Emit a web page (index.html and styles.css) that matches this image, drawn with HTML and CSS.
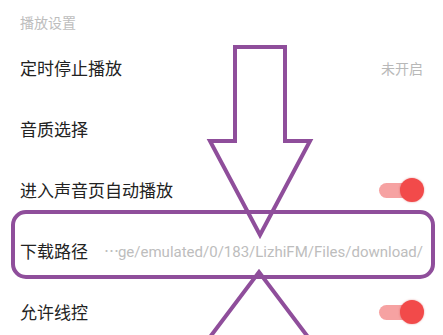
FILE: index.html
```html
<!DOCTYPE html>
<html lang="zh">
<head>
<meta charset="utf-8">
<link rel="stylesheet" href="styles.css">
</head>
<body>
<div class="page">
  <div class="section-title">播放设置</div>
  <div class="row">
    <span class="label">定时停止播放</span>
    <span class="value">未开启</span>
  </div>
  <div class="row">
    <span class="label">音质选择</span>
  </div>
  <div class="row">
    <span class="label">进入声音页自动播放</span>
    <span class="toggle"><span class="track"></span><span class="knob"></span></span>
  </div>
  <div class="row">
    <span class="label">下载路径</span>
    <span class="path"><span class="dots">…</span>ge/emulated/0/183/LizhiFM/Files/download/</span>
  </div>
  <div class="row">
    <span class="label">允许线控</span>
    <span class="toggle"><span class="track"></span><span class="knob"></span></span>
  </div>
  <svg class="annot" width="443" height="335" viewBox="0 0 443 335">
    <polygon points="235,47 285,47 285,141 310,141 260,235 210,141 235,141" />
    <polyline points="204,345 259,272 314,345" />
    <rect x="13" y="212" width="420" height="65" rx="13" ry="13" />
  </svg>
</div>
</body>
</html>
```
FILE: styles.css
```css
html, body {
  margin: 0;
  padding: 0;
  background: #ffffff;
}
.page {
  position: relative;
  width: 443px;
  height: 335px;
  overflow: hidden;
  font-family: "Noto Sans CJK SC", "Noto Sans", sans-serif;
}
.section-title {
  height: 37px;
  padding-left: 20px;
  box-sizing: border-box;
  display: flex;
  align-items: center;
  padding-top: 6px;
  font-size: 14px;
  color: #bdbdbd;
}
.row {
  height: 61px;
  display: flex;
  align-items: center;
  justify-content: space-between;
  padding: 0 20px 0 20px;
  box-sizing: border-box;
}
.label {
  font-size: 17px;
  color: #222222;
  white-space: nowrap;
}
.value {
  font-size: 14px;
  color: #b8b8b8;
}
.path {
  font-family: Roboto, "Noto Sans CJK SC", sans-serif;
  font-size: 15px;
  color: #bdbdbd;
  white-space: nowrap;
}
.dots {
  font-family: "Noto Sans CJK SC", sans-serif;
  letter-spacing: -1px;
}
.toggle {
  position: relative;
  width: 46px;
  height: 24px;
  margin-right: -2px;
}
.track {
  position: absolute;
  left: 0;
  top: 5px;
  width: 36px;
  height: 15px;
  border-radius: 8px;
  background: #f6a2a2;
}
.knob {
  position: absolute;
  left: 21px;
  top: 0;
  width: 24px;
  height: 24px;
  border-radius: 50%;
  background: #f24a4a;
  box-shadow: 0 0 2px rgba(200, 40, 40, 0.5);
}
.annot {
  position: absolute;
  left: 0;
  top: 0;
  pointer-events: none;
}
.annot polygon, .annot polyline, .annot rect {
  fill: none;
  stroke: #8f4e9b;
  stroke-width: 4;
  stroke-linejoin: miter;
}
```
